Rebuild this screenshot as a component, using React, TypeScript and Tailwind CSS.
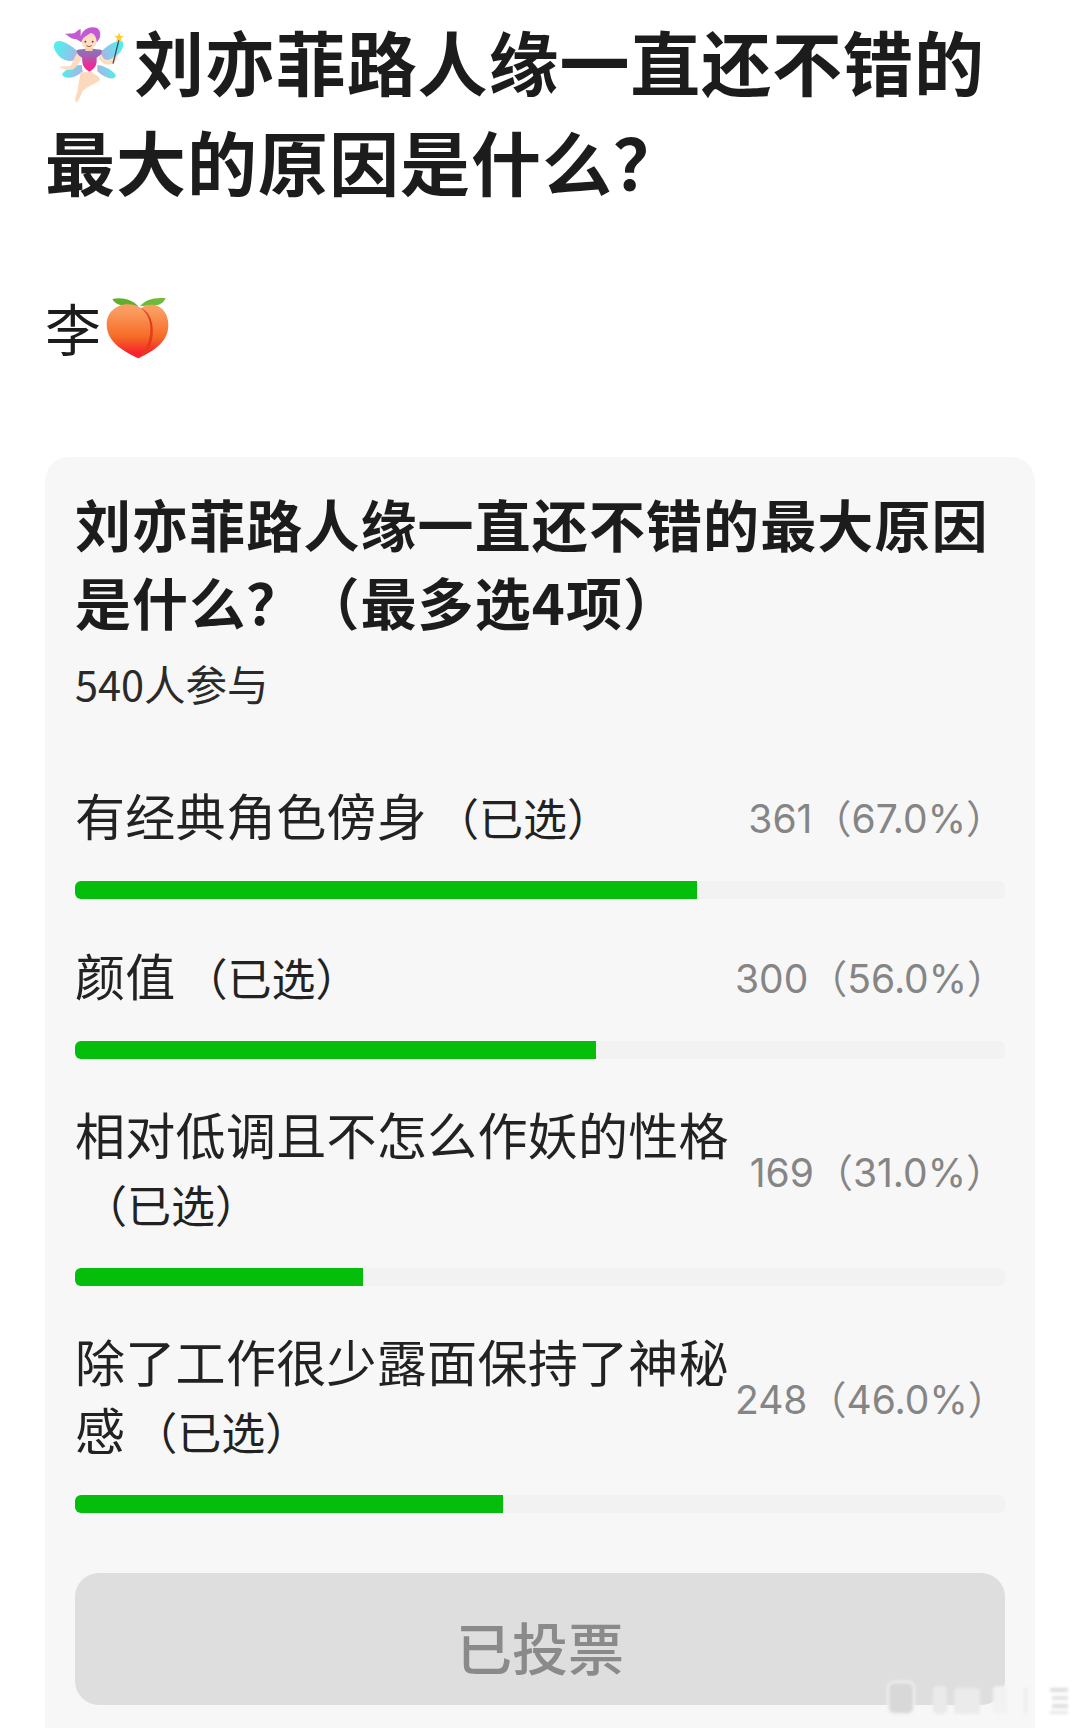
const font = { fontFamily: '"Noto Sans CJK SC", "Noto Sans", sans-serif' };
const numFont = { fontFamily: 'Inter, "Noto Sans CJK SC", sans-serif' };

function Fairy() {
  return (
    <svg viewBox="0 0 300 300" className="w-[100px] h-[100px] shrink-0 ml-[-5px] mt-[4px] mb-[-4px]">
      <defs>
        <linearGradient id="fd" x1="0" y1="0" x2="0" y2="1">
          <stop offset="0.15" stopColor="#8f70b8" />
          <stop offset="0.75" stopColor="#ef2a96" />
        </linearGradient>
        <linearGradient id="wl" x1="0" y1="0" x2="1" y2="0.3">
          <stop offset="0.2" stopColor="#55ecec" />
          <stop offset="1" stopColor="#a7b5e8" />
        </linearGradient>
        <linearGradient id="wr" x1="1" y1="0" x2="0" y2="0.3">
          <stop offset="0.2" stopColor="#55ecec" />
          <stop offset="1" stopColor="#a7b5e8" />
        </linearGradient>
      </defs>
      <path d="M122 118 C100 95 65 70 48 80 C32 92 50 125 75 135 C95 142 115 135 122 118 Z" fill="url(#wl)" />
      <path d="M176 118 C190 100 225 72 248 80 C256 92 240 120 215 132 C200 138 185 135 176 118 Z" fill="url(#wr)" />
      <path d="M125 150 C105 148 72 165 66 178 C72 195 105 190 128 170 Z" fill="url(#wl)" />
      <path d="M172 150 C190 150 222 168 228 182 C222 198 195 190 172 168 Z" fill="url(#wr)" />
      <path d="M122 172 C118 195 114 215 112 232 C106 245 104 255 108 263 C115 262 120 245 128 228 C140 215 170 205 180 195 C178 185 170 180 162 178 L158 172 Z" fill="#fcd9bc" />
      <path d="M114 112 C104 122 100 140 92 152 C80 155 68 152 58 155 C65 162 85 168 100 163 C112 152 122 138 126 125 Z" fill="#fddcc0" />
      <path d="M180 112 C186 122 190 130 196 136 C205 138 215 132 224 124 L234 118 C234 130 226 142 214 148 C200 152 185 145 176 132 Z" fill="#fddcc0" />
      <path d="M110 106 C125 100 170 100 186 106 C186 120 178 122 170 128 C170 145 172 155 148 170 C125 155 128 145 126 128 C118 122 110 118 110 106 Z" fill="url(#fd)" />
      <rect x="136" y="92" width="22" height="16" fill="#f8cdaa" />
      <circle cx="147" cy="78" r="23" fill="#fddcc0" />
      <path d="M122 78 C116 48 150 28 172 40 C186 50 182 72 170 82 C170 66 162 56 152 54 C142 62 128 65 124 82 C118 78 112 72 102 72 C92 70 85 62 74 56 C84 56 94 56 104 54 C110 50 114 44 122 42 Z" fill="#c45ad2" />
      <circle cx="136" cy="80" r="2.6" fill="#4a3328" />
      <circle cx="158" cy="80" r="2.6" fill="#4a3328" />
      <path d="M139 92 Q147 98 155 92" stroke="#7a4a3a" strokeWidth="2.5" fill="none" />
      <path d="M219 146 L237 74" stroke="#4a4458" strokeWidth="4" />
      <path d="M237 52 L241 62 L251 63 L243 70 L246 80 L237 74 L228 80 L231 70 L223 63 L233 62 Z" fill="#fccf33" />
    </svg>
  );
}

function Peach() {
  return (
    <svg viewBox="0 0 240 240" className="w-[80px] h-[80px] shrink-0 ml-[-6px] mt-[4px]">
      <defs>
        <linearGradient id="pg" x1="0" y1="0" x2="0" y2="1">
          <stop offset="0.1" stopColor="#fb9d62" />
          <stop offset="0.6" stopColor="#f56c26" />
          <stop offset="0.9" stopColor="#f8232e" />
        </linearGradient>
      </defs>
      <path d="M130 52 C112 32 82 24 52 30 C60 44 74 50 92 50 C104 50 118 50 130 52 Z" fill="#5fae2e" />
      <path d="M135 52 C150 32 180 24 212 28 C204 44 190 50 172 50 C158 50 146 50 135 52 Z" fill="#6dbb38" />
      <path d="M130 208 C95 190 35 165 35 105 C35 70 65 46 98 46 C115 46 128 50 138 58 C150 48 165 46 178 48 C205 54 220 78 220 108 C220 165 165 190 130 208 Z" fill="url(#pg)" />
      <path d="M136 56 C160 72 168 100 166 128 C164 160 150 185 130 206 C140 200 150 196 155 192 C172 165 178 130 170 98 C164 76 152 62 136 56 Z" fill="#e63a1c" />
    </svg>
  );
}

function Watermark() {
  return (
    <svg viewBox="0 0 190 38" className="absolute left-[880px] top-[1680px] w-[190px] h-[38px] blur-[1.5px]">
      <rect x="8" y="2" width="26" height="32" rx="6" fill="#d8d8d8" stroke="#f4f4f4" strokeWidth="2" />
      <rect x="53" y="6" width="14" height="28" rx="4" fill="#eaeaea" />
      <rect x="74" y="8" width="26" height="26" rx="3" fill="#ebebeb" />
      <rect x="113" y="6" width="14" height="28" rx="4" fill="#f2f2f2" />
      <rect x="143" y="8" width="5" height="26" fill="#f0f0f0" />
      <rect x="170" y="8" width="18" height="4" fill="#dddddd" />
      <rect x="172" y="16" width="16" height="4" fill="#e2e2e2" />
      <rect x="172" y="24" width="16" height="4" fill="#dddddd" />
      <rect x="170" y="31" width="18" height="3" fill="#e6e6e6" />
    </svg>
  );
}

const options = [
  { label: "有经典角色傍身", stat: "361（67.0%）", w: "w-[622px]", h: "h-[142px]" },
  { label: "颜值", stat: "300（56.0%）", w: "w-[521px]", h: "h-[142px]" },
  { label: "相对低调且不怎么作妖的性格", stat: "169（31.0%）", w: "w-[288px]", h: "h-[209px]" },
  { label: "除了工作很少露面保持了神秘感", stat: "248（46.0%）", w: "w-[428px]", h: "h-[209px]" },
];

export default function App() {
  return (
    <div style={font} className="relative w-[1080px] h-[1728px] overflow-hidden bg-white text-[#1c1c1c]">
      <div className="pl-[45px] pr-[40px] pt-[11px]">
        <h1 className="text-[70px] leading-[100px] font-bold flex flex-wrap">
          <Fairy />
          <span className="ml-[-6px] tracking-[0.9px]">刘亦菲路人缘一直还不错的</span>
          <span className="tracking-[1px]">最大的原因是什么？</span>
        </h1>
        <div className="mt-[66px] h-[100px] flex items-center text-[56px]">
          <span>李</span>
          <Peach />
        </div>
      </div>
      <div className="mx-[45px] mt-[80px] h-[1300px] rounded-[24px] bg-[#f7f7f7] px-[30px] pt-[27px]">
        <h2 className="text-[56px] leading-[78px] font-bold tracking-[1.1px]">刘亦菲路人缘一直还不错的最大原因是什么？（最多选4项）</h2>
        <p className="mt-[15px] text-[41.5px] leading-[56px] text-[#2a2a2a]">540人参与</p>
        <div className="mt-[28px] flex flex-col">
          {options.map((o) => (
            <div key={o.label} className="flex flex-col">
              <div className={`flex items-center pt-[10px] ${o.h}`}>
                <div className="w-[660px] shrink-0 text-[50px] leading-[68px] text-[#222] tracking-[0.3px]">
                  {o.label}
                  <span className="ml-[8px] text-[44px] tracking-normal">（已选）</span>
                </div>
                <div style={numFont} className="ml-auto mt-[9px] whitespace-nowrap text-[39px] text-[#858585]">{o.stat}</div>
              </div>
              <div className="h-[18px] w-[930px] rounded-[6px] bg-[#f2f2f2]">
                <div className={`h-full rounded-l-[6px] bg-[#05be0b] ${o.w}`} />
              </div>
            </div>
          ))}
        </div>
        <div className="mt-[60px] h-[132px] pt-[14px] rounded-[24px] bg-[#dedede] flex items-center justify-center text-[56px] font-medium text-[#8a8a8a]">已投票</div>
      </div>
      <Watermark />
    </div>
  );
}
